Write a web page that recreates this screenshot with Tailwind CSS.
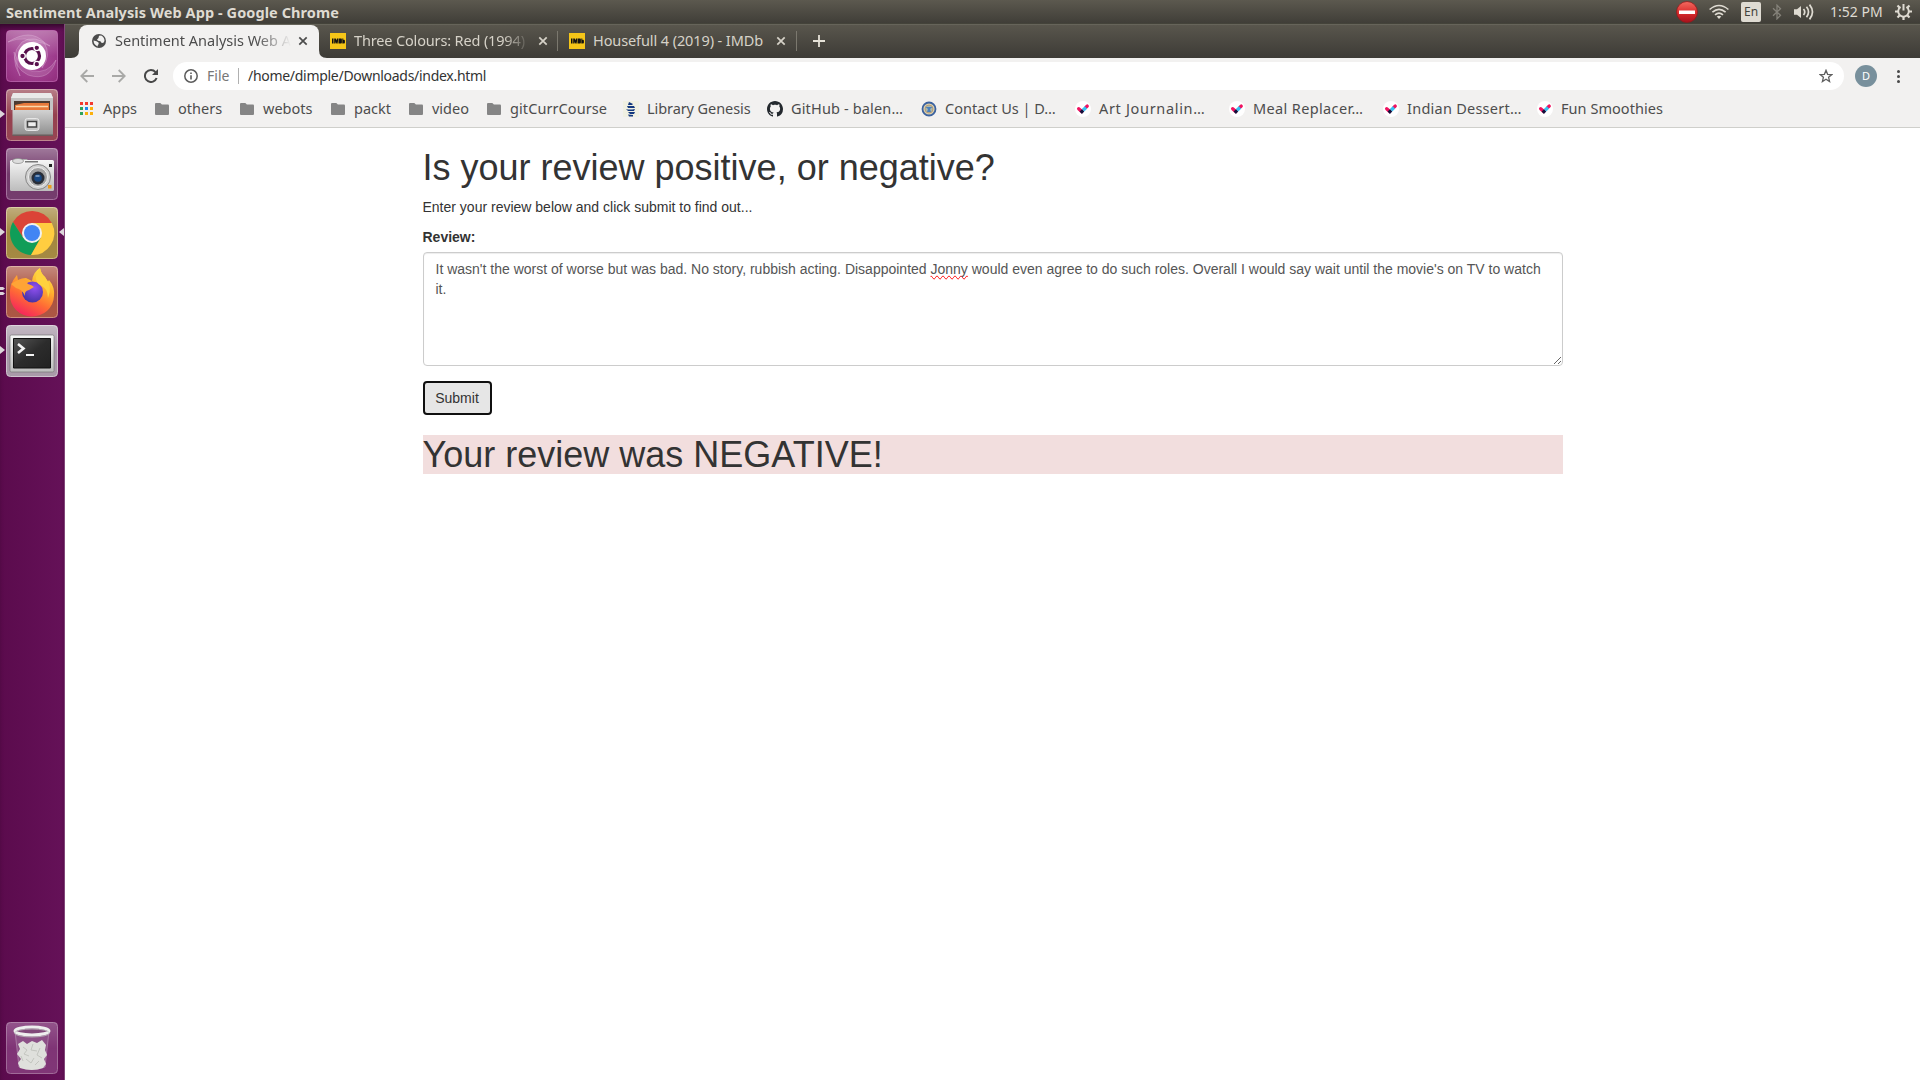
<!DOCTYPE html>
<html lang="en">
<head>
<meta charset="utf-8">
<title>Sentiment Analysis Web App</title>
<script src="https://cdn.jsdelivr.net/npm/@tailwindcss/browser@4"></script>
</head>
<body class="h-screen w-screen overflow-hidden bg-white flex flex-col font-['Noto_Sans',sans-serif]">

<svg class="absolute size-0">
  <defs>
    <symbol id="folder" viewBox="0 0 14 12"><path fill="#858585" d="M1.3 0h4l1.6 1.6h5.800c.8 0 1.300.5 1.300 1.300v7.800c0 .8-.5 1.300-1.300 1.300H1.300C.5 12 0 11.500 0 10.700V1.300C0 .5.5 0 1.300 0z"/></symbol>
    <symbol id="check" viewBox="0 0 16 16"><circle cx="8" cy="8" r="8" fill="#fff"/><path d="M3.700 7.700l3 2.800" stroke="#f0125f" stroke-width="3.400" stroke-linecap="round"/><path d="M12.300 5L11 6.200" stroke="#f0125f" stroke-width="3.200" stroke-linecap="round"/><path d="M11 6.400L8 9.200" stroke="#35bff2" stroke-width="3.400"/><path d="M7 8.200l2.200 2.300L6.900 13 4.600 10.500z" fill="#12123c"/></symbol>
    <symbol id="imdb" viewBox="0 0 16 16"><path fill="#f5c518" d="M0 0h16v16H0z"/><path fill="#111" d="M2 5.500h1.500v5H2zM4.200 5.500h1.600l.6 2 .6-2h1.500v5H7.300V8.300l-.6 2.200H6l-.6-2.200v2.200H4.200zM9 5.500h1.800c.9 0 1.100.4 1.100 1.200v2.600c0 .8-.3 1.200-1.100 1.200H9zM12.300 5.500h1v1.400c1.100-.4 1.600 0 1.600 1v1.600c0 1-.6 1.200-1.600.8v.2h-1z"/></symbol>
    <symbol id="close" viewBox="0 0 10 10"><path d="M1.300 1.300l7.400 7.400M8.700 1.300L1.300 8.700" stroke="currentColor" stroke-width="1.700"/></symbol>
    <linearGradient id="gloss" x1="0" y1="0" x2="0" y2="1"><stop offset="0" stop-color="#fff" stop-opacity=".38"/><stop offset=".5" stop-color="#fff" stop-opacity=".08"/><stop offset="1" stop-color="#fff" stop-opacity=".1"/></linearGradient>
    <linearGradient id="metal" x1="0" y1="0" x2="0" y2="1"><stop offset="0" stop-color="#d2d2d2"/><stop offset="1" stop-color="#8f8f8f"/></linearGradient>
    <linearGradient id="silver" x1="0" y1="0" x2="0" y2="1"><stop offset="0" stop-color="#f5f5f5"/><stop offset="1" stop-color="#bcbcbc"/></linearGradient>
    <linearGradient id="screen" x1="0" y1="0" x2="1" y2="1"><stop offset="0" stop-color="#555"/><stop offset=".5" stop-color="#2c2c2c"/><stop offset="1" stop-color="#222"/></linearGradient>
    <linearGradient id="fox" x1=".8" y1="0" x2=".3" y2="1"><stop offset="0" stop-color="#fff04d"/><stop offset=".35" stop-color="#ffb02e"/><stop offset=".65" stop-color="#ff6a35"/><stop offset="1" stop-color="#f5225e"/></linearGradient>
    <radialGradient id="orb" cx=".6" cy=".3" r=".8"><stop offset="0" stop-color="#9150f0"/><stop offset="1" stop-color="#3a2f9c"/></radialGradient>
    <radialGradient id="dash" cx=".5" cy=".45" r=".7"><stop offset="0" stop-color="#a8479b"/><stop offset=".7" stop-color="#93277f"/><stop offset="1" stop-color="#86176f"/></radialGradient>
    <linearGradient id="stop" x1="0" y1="0" x2="0" y2="1"><stop offset="0" stop-color="#f26b60"/><stop offset=".5" stop-color="#dc2f2f"/><stop offset="1" stop-color="#a8101c"/></linearGradient>
  </defs>
</svg>

<!-- system panel -->
<header class="h-6 shrink-0 flex items-center bg-linear-to-b from-[#5c594f] to-[#403e38] text-[#dfdbd2] border-b border-[#44433a]">
  <span class="ml-1.5 text-[14.500px] font-bold leading-6 whitespace-nowrap tracking-[0.08px]">Sentiment Analysis Web App - Google Chrome</span>
  <div class="ml-auto flex items-center h-6 pr-2">
    <svg class="size-[22px]" viewBox="0 0 22 22"><circle cx="11" cy="11" r="10.500" fill="url(#stop)" stroke="#8f1a1c" stroke-width=".8"/><path fill="#fff" d="M3 9.500h16v3.500H3z"/></svg>
    <svg class="ml-[11px] w-5 h-4" viewBox="0 0 20 16" fill="none" stroke="#dfdbd2" stroke-width="1.600"><path d="M.6 5.500Q10-2.500 19.400 5.500M3.400 8.200Q10 2.600 16.600 8.200M6 10.900Q10 7.400 14 10.900"/><path fill="#dfdbd2" stroke="none" d="M10 15l-2.300-2.500Q10 10.800 12.300 12.500z"/></svg>
    <span class="ml-3 w-5 h-5 rounded-[2px] bg-[#dfdbd2] text-[#45433c] text-[12px] leading-[20px] text-center">En</span>
    <svg class="ml-[10px] w-3 h-4" viewBox="0 0 12 16" fill="none" stroke="#85827a" stroke-width="1.300"><path d="M2 4.300l7.500 7L6 14.800V1.200l3.500 3.500-7.500 7"/></svg>
    <svg class="ml-[11px] w-5 h-[18px]" viewBox="0 0 20 18"><path fill="#dfdbd2" d="M0 6.200h3L7 3v12L3 11.800H0z"/><g fill="none" stroke="#dfdbd2" stroke-width="1.700"><path d="M9.500 6Q12 9 9.500 12M12.500 3.800Q16.500 9 12.500 14.200M15.500 1.600q6 7.400 0 14.800"/></g></svg>
    <span class="ml-4 w-[52px] text-[14px] leading-6 whitespace-nowrap">1:52 PM</span>
    <svg class="ml-[13px] size-[17px]" viewBox="0 0 17 17" fill="none" stroke="#dfdbd2"><path stroke-width="1.900" d="M5.600 4A5.300 5.300 0 1 0 11.400 4"/><path stroke-width="2" d="M8.500 1v6.500"/><path stroke-width="2.200" d="M0 8.500h3M14 8.500h3M8.500 14v3M2.500 14.500l2-2M14.500 14.500l-2-2M2.500 2.500l2 2M14.500 2.500l-2 2"/></svg>
  </div>
</header>

<div class="flex flex-1 min-h-0">
  <!-- launcher -->
  <nav class="w-[65px] shrink-0 bg-linear-to-r from-[#5b0b4d] to-[#651158] border-r border-[#82467a] shadow-[inset_0_5px_5px_-2px_#35072d] flex flex-col items-center gap-[7px] py-1.5">
    <svg class="size-[52px]" viewBox="0 0 52 52"><rect width="52" height="52" rx="4" fill="url(#dash)"/><g fill="#fff" fill-opacity=".12" stroke="#e3b4dd" stroke-opacity=".4" stroke-width=".8"><path d="M2 12Q24-2 38 12Q46 26 36 38Q42 24 34 16Q20 4 2 12z"/><path d="M50 30Q44 52 22 45Q8 38 8 22Q14 38 26 41Q42 44 50 30z"/><path d="M14 46Q2 26 16 12Q28 4 44 16Q28 8 18 16Q6 28 14 46z"/></g><rect x=".5" y=".5" width="51" height="51" rx="4" fill="url(#gloss)" stroke="#c47bbb" stroke-opacity=".6"/><circle cx="26" cy="26" r="14" fill="#fff"/><circle cx="26" cy="26" r="7.500" fill="none" stroke="#58104c" stroke-width="3.200"/><g fill="#58104c" stroke="#fff" stroke-width="1.300"><circle cx="16.500" cy="26" r="2.800"/><circle cx="30.800" cy="17.800" r="2.800"/><circle cx="30.800" cy="34.200" r="2.800"/></g></svg>
    <div class="relative size-[52px]">
      <svg class="size-[52px]" viewBox="0 0 52 52"><rect x=".5" y=".5" width="51" height="51" rx="4" fill="#8c3040" stroke="#b97982"/><rect width="52" height="52" rx="4" fill="url(#gloss)"/><path fill="#c4c4c4" d="M7 4h38l2 5v12H5V9z"/><path fill="#e9e9e9" d="M7 4h38l2 5H5z"/><path fill="#4c3a30" d="M8 12h36v9H8z"/><path fill="#e8793a" d="M9 16l9-2h25v7H9z"/><path stroke="#fbd9ac" stroke-width="1.500" d="M10 17.500h32"/><path fill="url(#metal)" d="M6.500 21h40.500v25H6.500z"/><path fill="#6b5c5c" d="M6.500 45.500h40.500v1.500H6.500z"/><rect x="19" y="29.500" width="14" height="12" rx="2.500" fill="#c4c4c4" stroke="#e6e6e6"/><rect x="21.500" y="32.500" width="9" height="5.500" fill="#eee" stroke="#444" stroke-width="1.500"/></svg>
      <svg class="absolute -left-1.5 top-[21px] w-[5px] h-2" viewBox="0 0 5 8"><path fill="#dcd6da" d="M0 0l5 4-5 4z"/></svg>
    </div>
    <svg class="size-[52px]" viewBox="0 0 52 52"><rect x=".5" y=".5" width="51" height="51" rx="4" fill="#66285e" stroke="#9b6293"/><rect width="52" height="52" rx="4" fill="url(#gloss)"/><path fill="#aaa" d="M7 11h14l2 3H6z"/><rect x="4" y="12" width="44" height="31" rx="1.500" fill="url(#silver)"/><ellipse cx="12" cy="13" rx="5.500" ry="2.500" fill="#ddd" stroke="#888" stroke-width=".7"/><path fill="#777" d="M19 13h13v1.500H19z"/><circle cx="32" cy="29" r="12.500" fill="#d2d2d2" stroke="#858585"/><circle cx="32" cy="29" r="9.500" fill="#a2a2a2" stroke="#eee"/><circle cx="32" cy="30" r="6.500" fill="#292e38"/><circle cx="32" cy="30" r="3.800" fill="#184781"/><path fill="#7292b8" d="M29.500 27h4v2h-4z"/><path fill="#222" d="M43 16h3v3h-3z"/><path fill="#ef9a1a" d="M42 37h3.500v3.500H42z"/></svg>
    <div class="relative size-[52px]">
      <svg class="size-[52px]" viewBox="0 0 52 52"><rect x=".5" y=".5" width="51" height="51" rx="4" fill="#9b7c2e" stroke="#c8b073"/><rect width="52" height="52" rx="4" fill="url(#gloss)"/><path fill="#db4437" d="M26 16H45.700A22 22 0 0 0 7 15L17.500 31z"/><path fill="#109d58" d="M17.300 31L7 15A22 22 0 0 0 25 48L34.500 31z"/><path fill="#ffcd40" d="M26 16H45.800A22 22 0 0 1 25 48L34.700 31z"/><circle cx="26" cy="26" r="10" fill="#f1f1f1"/><circle cx="26" cy="26" r="8" fill="#4285f4"/></svg>
      <svg class="absolute -left-1.5 top-[21px] w-[5px] h-2" viewBox="0 0 5 8"><path fill="#dcd6da" d="M0 0l5 4-5 4z"/></svg>
      <svg class="absolute left-[53px] top-[21px] w-[5px] h-2" viewBox="0 0 5 8"><path fill="#dcd6da" d="M5 0L0 4l5 4z"/></svg>
    </div>
    <div class="relative size-[52px]">
      <svg class="size-[52px]" viewBox="0 0 52 52"><rect x=".5" y=".5" width="51" height="51" rx="4" fill="#a34430" stroke="#c98470"/><rect width="52" height="52" rx="4" fill="url(#gloss)"/><path fill="url(#fox)" d="M26 15Q27 6 34 2q1 6 5 9 2 3 2 6l2-3q6 7 5 16A22 21 0 0 1 4 29Q3 18 11 9l1 5q4-2 8-2z"/><circle cx="26.500" cy="26" r="10.500" fill="url(#orb)"/><path fill="#ffa436" d="M5 18q8-6 13-4l4 4q4 1 6 3l-5 3q-5 1-4 6-3-7-9-8z"/><path fill="#ffd23e" d="M34 2q1 6 5 9 8 9 3 21 0-10-8-13-8-5 0-17z"/></svg>
      <svg class="absolute -left-1.5 top-[21px] w-[5px] h-2" viewBox="0 0 5 8"><path fill="#dcd6da" d="M0 0h3l2 1.500L3 3H0zM0 5h3l2 1.500L3 8H0z"/></svg>
    </div>
    <div class="relative size-[52px]">
      <svg class="size-[52px]" viewBox="0 0 52 52"><rect x=".5" y=".5" width="51" height="51" rx="4" fill="#a08fa0" stroke="#c9bcc9"/><rect width="52" height="52" rx="4" fill="url(#gloss)"/><rect x="4" y="10" width="44" height="37" rx="1.500" fill="url(#silver)" stroke="#777" stroke-width=".7"/><path fill="url(#screen)" stroke="#111" d="M7.500 13.500h37v29.500h-37z"/><path fill="none" stroke="#f4f4f4" stroke-width="2.600" d="M12 19l5.500 4.500L12 28"/><path stroke="#f4f4f4" stroke-width="2" d="M20 30h8"/></svg>
      <svg class="absolute -left-1.5 top-[21px] w-[5px] h-2" viewBox="0 0 5 8"><path fill="#dcd6da" d="M0 0l5 4-5 4z"/></svg>
    </div>
    <svg class="size-[52px] mt-auto" viewBox="0 0 52 52"><rect x=".5" y=".5" width="51" height="51" rx="4" fill="#7a2c70" stroke="#9b6293"/><rect width="52" height="52" rx="4" fill="url(#gloss)" opacity=".5"/><path fill="#8c4f86" stroke="#b48db0" stroke-width=".7" d="M9 9l4 36q13 5 26 0l4-36z"/><path fill="#dfe0dc" d="M12 22l5-3 4 3 5-3 5 2 5-3 4 5-1 5 2 5-3 4 2 5-3 4q-11 4-23 0l-2-5 3-4-4-5 3-5z"/><path fill="none" stroke="#c3c5bf" d="M17 25l4 3-3 4 5 2M27 22l-2 6 6 1M34 26l-3 7 5 3M20 37l5 4 3-5M29 43l4-4M15 34l2 5"/><ellipse cx="26" cy="9" rx="17" ry="4" fill="#81487a" stroke="#eee" stroke-width="3"/><ellipse cx="26" cy="11" rx="17.500" ry="4" fill="none" stroke="#bcbcbc" stroke-width=".8"/></svg>
  </nav>

  <!-- browser window -->
  <div class="flex-1 min-w-0 flex flex-col">
    <div class="h-[34px] shrink-0 flex bg-linear-to-b from-[#59564d] to-[#3d3b36] border-t border-[#66645a] text-[14.500px] text-[#d6d2c8]">
      <div class="w-3.5 flex items-end"><svg class="ml-auto size-2" viewBox="0 0 8 8"><path fill="#f2f1f0" d="M8 0v8H0Q8 8 8 0z"/></svg></div>
      <div class="w-60 flex items-center rounded-t-lg bg-[#f2f1f0] text-[#4c4c4c] pl-[13px] pr-[11px] pb-px">
        <svg class="size-[14px] shrink-0" viewBox="0 0 14 14"><circle cx="7" cy="7" r="7" fill="#4b4b4b"/><path fill="#f2f1f0" d="M1.500 6.500l3 .8 2 1.200.2 1.500-1 1.200.2 1.200Q1.800 11 1.500 6.500zM7 1.800l2.200-.3Q12.500 3 12.500 7l-1.300 2-1.800-.3-1-1.500-2.400-.4-1-1.300L6.500 4z"/></svg>
        <div class="ml-[9px] w-[176px] -mt-px overflow-hidden whitespace-nowrap mask-r-from-80% mask-r-to-100%">Sentiment Analysis Web App</div>
        <svg class="ml-auto size-2.5 shrink-0"><use href="#close"/></svg>
      </div>
      <div class="w-[238px] flex items-center relative pr-[9px] pb-px">
        <svg class="absolute left-0 bottom-0 size-2" viewBox="0 0 8 8"><path fill="#f2f1f0" d="M0 0v8h8Q0 8 0 0z"/></svg>
        <svg class="ml-[11px] size-4 shrink-0"><use href="#imdb"/></svg>
        <div class="ml-2 w-[176px] -mt-px overflow-hidden whitespace-nowrap tracking-[-0.15px] mask-r-from-85% mask-r-to-100%">Three Colours: Red (1994)</div>
        <svg class="ml-auto size-2.5 shrink-0"><use href="#close"/></svg>
      </div>
      <div class="w-[239px] flex items-center pr-2.5 pb-px">
        <span class="w-px h-5 bg-[#7b786e]"></span>
        <svg class="ml-[11px] size-4 shrink-0"><use href="#imdb"/></svg>
        <div class="ml-2 w-[174px] -mt-px overflow-hidden whitespace-nowrap tracking-[-0.1px]">Housefull 4 (2019) - IMDb</div>
        <svg class="ml-auto size-2.5 shrink-0"><use href="#close"/></svg>
      </div>
      <div class="flex items-center pb-px"><span class="w-px h-5 bg-[#7b786e]"></span><svg class="ml-4 size-3" viewBox="0 0 12 12"><path d="M6 0v12M0 6h12" stroke="#e6e2d8" stroke-width="1.800"/></svg></div>
    </div>

    <div class="h-[70px] shrink-0 bg-[#f2f1f0] border-b border-[#cfcfcb] flex flex-col text-[#4d4d4d]">
      <div class="mt-1 h-7 flex items-center pl-[15px]">
        <svg class="w-[14px] h-[14px]" viewBox="0 0 14 14" fill="none" stroke="#a9a9a7" stroke-width="1.800"><path d="M14 7H1.500M7.300 1L1.300 7l6 6"/></svg>
        <svg class="ml-[18px] w-[14px] h-[14px]" viewBox="0 0 14 14" fill="none" stroke="#a9a9a7" stroke-width="1.800"><path d="M0 7h12.500M6.700 1l6 6-6 6"/></svg>
        <svg class="ml-[18px] w-[14px] h-[14px]" viewBox="0 0 14 14"><path fill="none" stroke="#484848" stroke-width="2" d="M12.600 9A6 6 0 1 1 11.500 3.100"/><path fill="#484848" d="M14 0v6H8z"/></svg>
        <div class="ml-[15px] w-[1671px] h-7 rounded-full bg-white flex items-center pl-[11px] pr-[11px] text-[14px]">
          <svg class="size-[14px]" viewBox="0 0 14 14"><circle cx="7" cy="7" r="6.200" fill="none" stroke="#5c5c5c" stroke-width="1.500"/><path fill="#5c5c5c" d="M6.200 6.200h1.600v4.300H6.200zM6.200 3.400h1.600V5H6.200z"/></svg>
          <span class="ml-[9px] w-[31px] -mt-px text-[#777]">File</span>
          <span class="w-px h-4 bg-[#b0b0b0]"></span>
          <span class="ml-[9px] -mt-px text-[#333] whitespace-nowrap tracking-[-0.29px]">/home/dimple/Downloads/index.html</span>
          <svg class="ml-auto size-[14px]" viewBox="0 0 14 14"><path fill="none" stroke="#606060" stroke-width="1.300" d="M7 1.300l1.600 4 4.200.3-3.200 2.700 1 4.200L7 10.200l-3.600 2.300 1-4.200L1.200 5.600l4.200-.3z"/></svg>
        </div>
        <span class="ml-[11px] size-[22px] rounded-full bg-[#78909c] text-white text-[11px] leading-[22px] text-center">D</span>
        <svg class="ml-5 w-[3px] h-[13px]" viewBox="0 0 3 13" fill="#484848"><circle cx="1.500" cy="1.500" r="1.500"/><circle cx="1.500" cy="6.500" r="1.500"/><circle cx="1.500" cy="11.500" r="1.500"/></svg>
      </div>
      <div class="h-[37px] flex items-center pl-[15px] text-[14.500px] whitespace-nowrap">
        <a class="w-[75px] shrink-0 flex items-center"><svg class="size-[13px] mr-[10px]" viewBox="0 0 13 13"><path fill="#f33a30" d="M0 0h3v3H0zM5 0h3v3H5zM10 0h3v3h-3z"/><path fill="#2ea25a" d="M0 5h3v3H0zM0 10h3v3H0z"/><path fill="#1e88f0" d="M5 5h3v3H5z"/><path fill="#fbb00c" d="M10 5h3v3h-3zM5 10h3v3H5zM10 10h3v3h-3z"/></svg>Apps</a>
        <a class="w-[85px] shrink-0 flex items-center"><svg class="w-[14px] h-3 mr-[9px]"><use href="#folder"/></svg>others</a>
        <a class="w-[91px] shrink-0 flex items-center"><svg class="w-[14px] h-3 mr-[9px]"><use href="#folder"/></svg>webots</a>
        <a class="w-[78px] shrink-0 flex items-center"><svg class="w-[14px] h-3 mr-[9px]"><use href="#folder"/></svg>packt</a>
        <a class="w-[78px] shrink-0 flex items-center"><svg class="w-[14px] h-3 mr-[9px]"><use href="#folder"/></svg>video</a>
        <a class="w-[136px] shrink-0 flex items-center tracking-[0.08px]"><svg class="w-[14px] h-3 mr-[9px]"><use href="#folder"/></svg>gitCurrCourse</a>
        <a class="w-36 shrink-0 flex items-center tracking-[-0.08px]"><svg class="size-4 mr-2" viewBox="0 0 16 16"><path fill="#f0f0e2" d="M0 0h16v16H0z"/><path fill="#14397f" d="M6 1l4 2-1 1H5zM4 5h7l1 2H5zM3 8q3 1 9 0l-1 2H5zM5 11h7l-1 2H7zM5 13.500l5 .5v1.500H6z"/></svg>Library Genesis</a>
        <a class="w-[154px] shrink-0 flex items-center tracking-[0.15px]"><svg class="size-4 mr-2" viewBox="0 0 16 16"><path fill="#24292e" d="M8 0C3.580 0 0 3.580 0 8c0 3.540 2.290 6.530 5.470 7.590.4.070.55-.17.55-.38 0-.19-.01-.82-.01-1.490-2.010.37-2.530-.49-2.690-.94-.09-.23-.48-.94-.82-1.130-.28-.15-.68-.52-.01-.53.63-.01 1.080.58 1.230.82.72 1.210 1.870.87 2.330.66.07-.52.28-.87.51-1.070-1.780-.2-3.640-.89-3.640-3.950 0-.87.31-1.590.82-2.150-.08-.2-.36-1.020.08-2.120 0 0 .67-.21 2.200.82.64-.18 1.320-.27 2-.27s1.360.09 2 .27c1.530-1.040 2.200-.82 2.200-.82.44 1.100.16 1.920.08 2.120.51.56.82 1.270.82 2.150 0 3.070-1.870 3.750-3.650 3.950.29.25.54.73.54 1.480 0 1.070-.01 1.930-.01 2.200 0 .21.15.46.55.38A8.010 8.010 0 0 0 16 8c0-4.420-3.580-8-8-8z"/></svg>GitHub - balen…</a>
        <a class="w-[154px] shrink-0 flex items-center"><svg class="size-4 mr-2" viewBox="0 0 16 16"><circle cx="8" cy="8" r="6.500" fill="#d9cfae" stroke="#3b62a0" stroke-width="1.800"/><circle cx="8" cy="8" r="4" fill="#a9b9ae" stroke="#b78d62" stroke-width=".7"/><path fill="#4b80bd" d="M4.500 6h7L9 8l1 3H6l1-3z"/></svg>Contact Us | D…</a>
        <a class="w-[154px] shrink-0 flex items-center tracking-[0.67px]"><svg class="size-4 mr-2"><use href="#check"/></svg>Art Journalin…</a>
        <a class="w-[154px] shrink-0 flex items-center tracking-[0.36px]"><svg class="size-4 mr-2"><use href="#check"/></svg>Meal Replacer…</a>
        <a class="w-[154px] shrink-0 flex items-center tracking-[0.25px]"><svg class="size-4 mr-2"><use href="#check"/></svg>Indian Dessert…</a>
        <a class="shrink-0 flex items-center tracking-[0.05px]"><svg class="size-4 mr-2"><use href="#check"/></svg>Fun Smoothies</a>
      </div>
    </div>

    <main class="flex-1 w-[1140px] ml-[357.5px] font-['Liberation_Sans',sans-serif] text-[14px] leading-5 text-[#333]">
      <h1 class="mt-5 mb-2.5 text-[36px] leading-[39px]">Is your review positive, or negative?</h1>
      <p class="mb-2.5">Enter your review below and click submit to find out...</p>
      <label class="block mb-[5px] font-bold">Review:</label>
      <div class="h-[114px] resize overflow-auto rounded-[4px] border border-[#ccc] px-3 py-1.5 text-[#555] shadow-[inset_0_1px_1px_rgba(0,0,0,0.075)]">It wasn't the worst of worse but was bad. No story, rubbish acting. Disappointed <span class="[text-decoration-line:spelling-error]">Jonny</span> would even agree to do such roles. Overall I would say wait until the movie's on TV to watch it.</div>
      <button class="mt-[15px] block h-[34px] w-[69px] rounded-[4px] border-2 border-[#101010] bg-[#e6e6e6] text-center">Submit</button>
      <h1 class="mt-5 bg-[#f2dede] text-[36px] leading-[39px]">Your review was NEGATIVE!</h1>
    </main>
  </div>
</div>
</body>
</html>
